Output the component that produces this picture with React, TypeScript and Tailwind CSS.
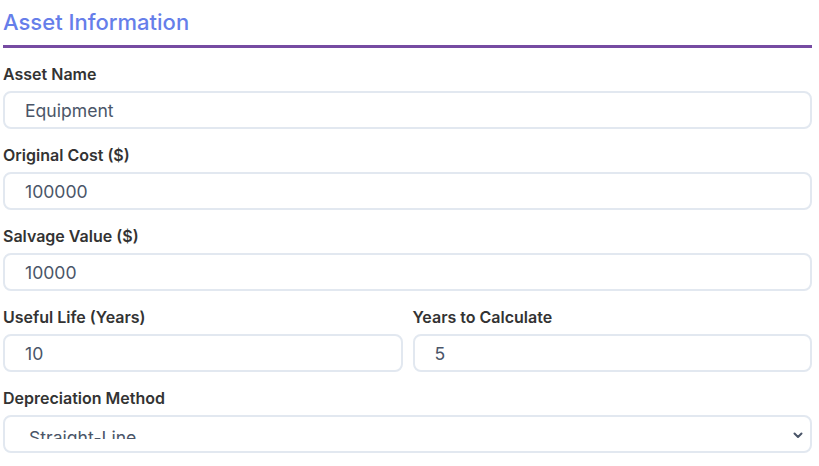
import React from "react";

const font = { fontFamily: "Inter, 'Noto Sans', sans-serif" };

function Field({ label, value }: { label: string; value: string }) {
  return (
    <div className="mb-4 flex flex-col">
      <label className="mb-[7px] text-[16px] leading-5 font-semibold text-[#333]">{label}</label>
      <div className="h-[38px] rounded-lg border-2 border-[#e2e8f0] bg-white pl-5 pt-px text-[17.6px] leading-[33px] text-[#4a5568]">
        {value}
      </div>
    </div>
  );
}

export default function App() {
  return (
    <div style={font} className="w-[819px] h-[466px] overflow-hidden bg-white pl-[3px] pr-[7px]">
      <h2 className="pt-2 pb-[9px] text-[22px] leading-[28px] font-medium text-[#667eea] border-b-[3px] border-[#764ba2] mb-4">
        Asset Information
      </h2>
      <Field label="Asset Name" value="Equipment" />
      <Field label="Original Cost ($)" value="100000" />
      <Field label="Salvage Value ($)" value="10000" />
      <div className="grid grid-cols-2 gap-[10px]">
        <Field label="Useful Life (Years)" value="10" />
        <Field label="Years to Calculate" value="5" />
      </div>
      <div className="flex flex-col">
        <label className="mb-[7px] text-[16px] leading-5 font-semibold text-[#333]">Depreciation Method</label>
        <div className="relative h-[38px] rounded-lg border-2 border-[#e2e8f0] bg-white">
          <div className="h-[22px] overflow-hidden pl-[24px] pt-[10px] text-[17.6px] leading-[22px] text-[#4a5568]">
            Straight-Line
          </div>
          <svg
            className="absolute right-[7px] top-[14px]"
            width="10"
            height="8"
            viewBox="0 0 10 8"
            fill="none"
            stroke="#4a5568"
            strokeWidth="2"
            strokeLinecap="round"
            strokeLinejoin="round"
          >
            <path d="M1.5 2.5 L5 6 L8.5 2.5" />
          </svg>
        </div>
      </div>
    </div>
  );
}
